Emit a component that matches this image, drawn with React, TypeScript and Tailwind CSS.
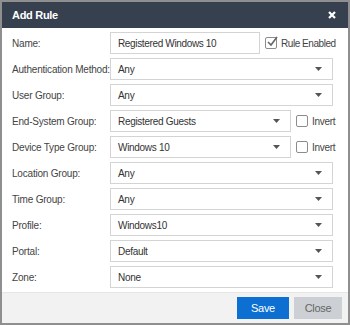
import React from "react";

const font = { fontFamily: '"Liberation Sans", Arial, sans-serif' };

const Caret = () => (
  <svg width="7" height="4" viewBox="0 0 7 4" className="shrink-0">
    <path d="M0 0H7L3.5 4Z" fill="#555" />
  </svg>
);

const Select = ({ value, short }: { value: string; short?: boolean }) => (
  <div
    className={`h-[22px] ${short ? "w-[181px]" : "w-[223px]"} flex items-center justify-between border border-[#d4d4d4] bg-white pl-[7px] pr-[10px] text-[10px] tracking-[-0.3px] text-[#333]`}
  >
    <span>{value}</span>
    <Caret />
  </div>
);

const Box = ({ checked }: { checked?: boolean }) => (
  <div className="relative w-[12px] h-[12px] border border-[#8c8c8c] rounded-[2px] bg-white shrink-0">
    {checked && (
      <svg width="12" height="11" viewBox="0 0 12 11" className="absolute left-[0px] top-[-2px]">
        <path d="M2 6L5 9L11 1" stroke="#666" strokeWidth="1.6" fill="none" />
      </svg>
    )}
  </div>
);

const rows: { label: string; value: string; invert?: boolean }[] = [
  { label: "Authentication Method:", value: "Any" },
  { label: "User Group:", value: "Any" },
  { label: "End-System Group:", value: "Registered Guests", invert: true },
  { label: "Device Type Group:", value: "Windows 10", invert: true },
  { label: "Location Group:", value: "Any" },
  { label: "Time Group:", value: "Any" },
  { label: "Profile:", value: "Windows10" },
  { label: "Portal:", value: "Default" },
  { label: "Zone:", value: "None" },
];

export default function App() {
  return (
    <div style={font} className="w-[350px] h-[325px] border-2 border-[#8f8f8f] flex flex-col bg-white">
      <div className="h-[26px] bg-[#36404f] flex items-center justify-between pl-[10px] pr-[12px] shrink-0">
        <span className="text-white font-bold text-[11px] tracking-[-0.3px]">Add Rule</span>
        <svg width="8" height="8" viewBox="0 0 8 8">
          <path d="M1 1L7 7M7 1L1 7" stroke="#fff" strokeWidth="2.2" />
        </svg>
      </div>
      <div className="flex-1 flex flex-col gap-[4px] pt-[4px] pl-[10px]">
        <div className="flex items-center h-[22px]">
          <div className="w-[98px] text-[10px] tracking-[-0.2px] text-[#444]">Name:</div>
          <div className="w-[150px] h-[22px] border border-[#d4d4d4] flex items-center pl-[7px] text-[10px] tracking-[-0.35px] text-[#333]">
            Registered Windows 10
          </div>
          <div className="flex items-center gap-[4px] ml-[5px]">
            <Box checked />
            <span className="text-[10px] tracking-[-0.45px] text-[#444]">Rule Enabled</span>
          </div>
        </div>
        {rows.map((r) => (
          <div key={r.label} className="flex items-center h-[22px]">
            <div className="w-[98px] text-[10px] tracking-[-0.2px] text-[#444] whitespace-nowrap">{r.label}</div>
            <Select value={r.value} short={r.invert} />
            {r.invert && (
              <div className="flex items-center gap-[4px] ml-[5px]">
                <Box />
                <span className="text-[10px] tracking-[-0.3px] text-[#444]">Invert</span>
              </div>
            )}
          </div>
        ))}
      </div>
      <div className="h-[31px] bg-[#f2f2f2] border-t border-[#e6e6e6] flex items-center justify-end gap-[5px] pr-[6px] shrink-0">
        <button className="w-[52px] h-[22px] bg-[#0c6fd1] text-white text-[11px] tracking-[-0.3px]">Save</button>
        <button className="w-[48px] h-[22px] bg-[#ccd0d4] text-[#666] text-[11px] tracking-[-0.3px]">Close</button>
      </div>
    </div>
  );
}
